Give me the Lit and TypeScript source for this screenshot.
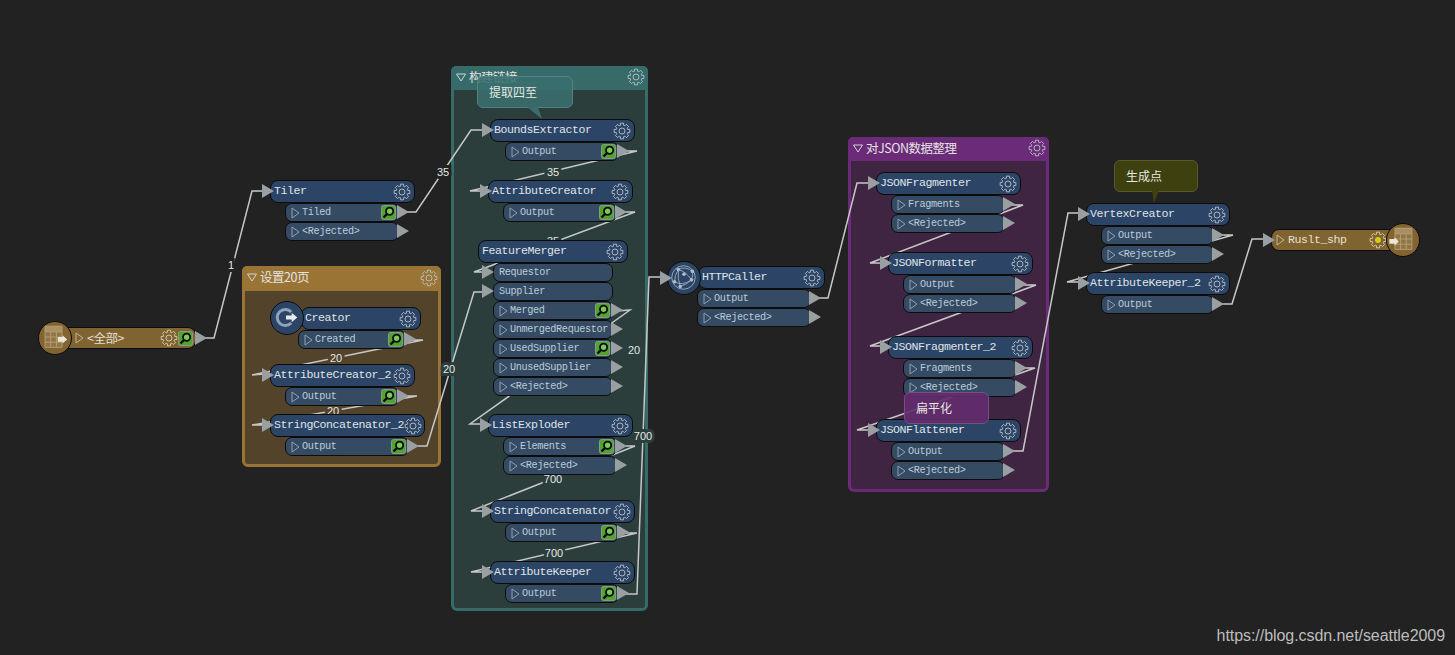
import { LitElement, html, css, svg } from "lit";
import { customElement } from "lit/decorators.js";

type Port = { n: string; mag?: boolean; input?: boolean };
type Node = { name: string; x: number; y: number; w: number; px?: number; pw?: number; ports: Port[]; noInput?: boolean };

const out = (...names: string[]): Port[] =>
  names.map((s) => (s.endsWith("*") ? { n: s.slice(0, -1), mag: true } : { n: s }));

const NODES: Node[] = [
  { name: "Tiler", x: 270, y: 180, w: 145, ports: out("Tiled*", "<Rejected>") },
  { name: "Creator", x: 301, y: 307, w: 120, px: -3, pw: 108, noInput: true, ports: out("Created*") },
  { name: "AttributeCreator_2", x: 270, y: 364, w: 145, ports: out("Output*") },
  { name: "StringConcatenator_2", x: 270, y: 414, w: 155, ports: out("Output*") },
  { name: "BoundsExtractor", x: 490, y: 119, w: 145, ports: out("Output*") },
  { name: "AttributeCreator", x: 488, y: 180, w: 145, ports: out("Output*") },
  {
    name: "FeatureMerger", x: 478, y: 240, w: 150, pw: 120, noInput: true,
    ports: [
      { n: "Requestor", input: true }, { n: "Supplier", input: true },
      ...out("Merged*", "UnmergedRequestor", "UsedSupplier*", "UnusedSupplier", "<Rejected>"),
    ],
  },
  { name: "ListExploder", x: 488, y: 414, w: 145, ports: out("Elements*", "<Rejected>") },
  { name: "StringConcatenator", x: 490, y: 500, w: 145, ports: out("Output*") },
  { name: "AttributeKeeper", x: 490, y: 561, w: 145, ports: out("Output*") },
  { name: "HTTPCaller", x: 698, y: 266, w: 127, px: -1, pw: 114, noInput: true, ports: out("Output", "<Rejected>") },
  { name: "JSONFragmenter", x: 876, y: 172, w: 145, ports: out("Fragments", "<Rejected>") },
  { name: "JSONFormatter", x: 888, y: 252, w: 145, ports: out("Output", "<Rejected>") },
  { name: "JSONFragmenter_2", x: 888, y: 336, w: 145, ports: out("Fragments", "<Rejected>") },
  { name: "JSONFlattener", x: 876, y: 419, w: 145, ports: out("Output", "<Rejected>") },
  { name: "VertexCreator", x: 1086, y: 203, w: 144, ports: out("Output", "<Rejected>") },
  { name: "AttributeKeeper_2", x: 1086, y: 272, w: 144, ports: out("Output") },
];

const GROUPS = [
  { name: "设置20页", x: 242, y: 266, w: 199, h: 201, bar: 25, tone: "brown" },
  { name: "构建链接", x: 451, y: 66, w: 197, h: 545, bar: 24, tone: "teal" },
  { name: "对JSON数据整理", x: 848, y: 137, w: 201, h: 355, bar: 24, tone: "purple" },
];

const LINES: [number, number][][] = [
  [[200, 338], [214, 338], [252, 191], [266, 191]],
  [[402, 212], [416, 212], [471, 130], [484, 130]],
  [[622, 151], [637, 151], [470, 191], [482, 191]],
  [[622, 212], [635, 212], [474, 272], [486, 272]],
  [[410, 340], [423, 340], [252, 375], [265, 374]],
  [[404, 396], [417, 396], [252, 425], [265, 425]],
  [[412, 446], [427, 446], [474, 292], [486, 292]],
  [[617, 311], [630, 310], [470, 424], [482, 424]],
  [[622, 446], [635, 446], [471, 511], [484, 511]],
  [[622, 533], [637, 533], [471, 572], [484, 572]],
  [[622, 594], [637, 594], [649, 277], [664, 277]],
  [[814, 298], [828, 298], [857, 183], [870, 183]],
  [[1009, 205], [1023, 205], [870, 263], [882, 263]],
  [[1021, 285], [1036, 285], [870, 346], [882, 346]],
  [[1021, 368], [1035, 368], [857, 430], [870, 430]],
  [[1008, 451], [1023, 451], [1068, 213], [1080, 213]],
  [[1218, 235], [1233, 235], [1067, 282], [1080, 282]],
  [[1218, 304], [1232, 304], [1252, 239], [1264, 239]],
];

const BG = "#222222";
const TEAL = "#2b3e3b";
const BROWN = "#54432b";
const LABELS: [string, number, number, string][] = [
  ["1", 231, 265, BG],
  ["35", 443, 172, BG],
  ["35", 553, 172, TEAL],
  ["35", 553, 241, TEAL],
  ["20", 336, 358, BROWN],
  ["20", 333, 411, BROWN],
  ["20", 449, 369, TEAL],
  ["20", 634, 350, TEAL],
  ["700", 553, 479, TEAL],
  ["700", 554, 553, TEAL],
  ["700", 643, 436, TEAL],
];

const ANNOTATIONS = [
  { text: "提取四至", x: 477, y: 76, w: 96, h: 32, tone: "a-teal", tail: "50,31 61,31 65,43" },
  { text: "生成点", x: 1114, y: 160, w: 84, h: 32, tone: "a-olive", tail: "38,31 45,31 40,43" },
  { text: "扁平化", x: 904, y: 392, w: 85, h: 32, tone: "a-purple", tail: "" },
];

function gearPath(): string {
  const n = 8, ro = 8, ri = 5.9;
  const pts: string[] = [];
  for (let i = 0; i < n; i++) {
    const a = (i * 2 * Math.PI) / n;
    const d = 0.2, e = 0.27;
    const add = (r: number, t: number) => pts.push(`${(r * Math.cos(t)).toFixed(2)} ${(r * Math.sin(t)).toFixed(2)}`);
    add(ri, a - e);
    add(ro, a - d);
    add(ro, a + d);
    add(ri, a + e);
  }
  return "M" + pts.join("L") + "Z";
}
const GEAR = gearPath();

const gear = (dot = false) => html`<svg class="gear" viewBox="-9 -9 18 18">
  <path d=${GEAR}></path>
  ${dot ? svg`<circle class="gear-dot" r="3"></circle>` : svg`<circle r="3"></circle>`}
</svg>`;

const expander = () => html`<svg class="exp" viewBox="0 0 9 12"><path d="M1 1 L8 6 L1 11 Z"></path></svg>`;

const mag = () => html`<svg class="mag" viewBox="0 0 15 15">
  <rect class="mag-bg" x="0.5" y="0.5" width="14" height="14" rx="2"></rect>
  <line class="mag-h" x1="6" y1="9" x2="2.5" y2="12.5"></line>
  <circle class="mag-l" cx="8.6" cy="6.2" r="3.6"></circle>
</svg>`;

const tableIcon = (left: boolean) => html`<svg class="disc-ic" viewBox="0 0 33 33">
  <g transform=${left ? "translate(2 0)" : "translate(0 0)"}>
    <rect class="t-head" x="6.5" y="4.5" width="18" height="6"></rect>
    <path class="t-grid" d="M6.5 4.5H24.5V27H6.5ZM6.5 10.5H24.5M6.5 16H24.5M6.5 21.5H24.5M12.5 10.5V27M18.5 10.5V27"></path>
  </g>
  <path class="t-arrow" d=${left ? "M2.5 16H8V14L12.5 18.5L8 23V21H2.5Z" : "M20 16H25V14L30 18.5L25 23V21H20Z"}></path>
</svg>`;

const creatorIcon = () => html`<svg class="disc-ic" viewBox="0 0 33 33">
  <path class="c-ring" d="M21.5 10.6 A8.6 8.6 0 1 0 21.5 22.4"></path>
  <path class="c-arrow" d="M16 14.3H22V11.5L28 16.5L22 21.5V18.7H16Z"></path>
</svg>`;

const globeIcon = () => html`<svg class="disc-ic" viewBox="0 0 33 33">
  <circle class="g-line" cx="16.5" cy="16.5" r="12.5"></circle>
  <path class="g-line" d="M11 8Q18 4 26 10M11 8Q7 14 7 21M11 8Q19 10 25 19M11 8Q10 18 13 26M25 19Q27 14 26 10M7 21Q15 26 25 19M13 26Q20 24 25 19"></path>
  ${[[11, 8], [26, 10], [25, 19], [13, 26], [7, 21], [17, 13]].map(
    ([x, y]) => svg`<circle class="g-dot" cx=${x} cy=${y} r="1.9"></circle>`
  )}
</svg>`;

@customElement("app-root")
export class AppRoot extends LitElement {
  static styles = css`
    :host {
      display: block;
      position: relative;
      width: 1455px;
      height: 655px;
      overflow: hidden;
      background: #222222;
      font-family: "Liberation Mono", "Noto Sans CJK SC", monospace;
    }
    .wires {
      position: absolute;
      left: 0;
      top: 0;
      width: 1455px;
      height: 655px;
    }
    .wires polyline { fill: none; stroke: #c6c8c8; stroke-width: 1.5; }
    .wires text {
      fill: #e6e6e6;
      font: 11px "Liberation Sans", sans-serif;
      text-anchor: middle;
      dominant-baseline: central;
      paint-order: stroke;
      stroke-width: 6px;
    }

    .group {
      position: absolute;
      box-sizing: border-box;
      border-radius: 6px;
      border: 3px solid;
      display: flex;
      flex-direction: column;
    }
    .group.brown { border-color: #9a7434; background: #54432b; }
    .group.teal { border-color: #376b69; background: #2b3e3b; }
    .group.purple { border-color: #6b2b78; background: #402543; }
    .brown .bar { background: #9a7434; }
    .teal .bar { background: #376b69; }
    .purple .bar { background: #6b2b78; }
    .bar {
      display: flex;
      align-items: center;
      gap: 3px;
      box-sizing: border-box;
      color: #e4e4e4;
      font-size: 12.5px;
      letter-spacing: -0.5px;
      font-family: "Noto Sans CJK SC", sans-serif;
      margin: -3px -3px 0 -3px;
      padding: 0 3px 4px 5px;
      border-radius: 5px 5px 0 0;
    }
    .bar .gear { margin-left: auto; margin-top: 2px; }
    .tri-down { width: 10px; height: 9px; flex: none; fill: none; stroke: #d0d4d4; stroke-width: 1; margin-top: 2px; }

    .node {
      position: absolute;
      display: flex;
      flex-direction: column;
    }
    .head {
      position: relative;
      box-sizing: border-box;
      height: 23px;
      display: flex;
      align-items: center;
      justify-content: space-between;
      padding: 0 3px 3px 3px;
      background: #2c4566;
      border: 1px solid #0c0c0c;
      border-radius: 8px;
      color: #dfe4e8;
      font-size: 11.6px;
      letter-spacing: -0.46px;
      white-space: nowrap;
    }
    .head .gear { margin-top: 3px; }
    .ports { display: flex; flex-direction: column; position: relative; }
    .port {
      position: relative;
      box-sizing: border-box;
      height: 19px;
      display: flex;
      align-items: center;
      padding: 0 2px 1px 5px;
      gap: 2px;
      background: #354b64;
      border: 1px solid #0c0c0c;
      border-radius: 7px;
      color: #bccbd9;
      font-size: 10.2px;
      letter-spacing: -0.35px;
      white-space: nowrap;
    }
    .port .mag { margin-left: auto; margin-top: 1px; }
    .exp { width: 9px; height: 12px; flex: none; margin-top: 1px; }
    .exp path { fill: none; stroke: #8fa0b0; stroke-width: 1; }
    .gear { width: 18px; height: 18px; flex: none; }
    .gear path, .gear circle { fill: none; stroke: #b9c2ca; stroke-width: 0.9; }
    .gear .gear-dot { fill: #cfc414; stroke: none; }
    .mag { width: 15px; height: 15px; flex: none; }
    .mag-bg { fill: #4fa52f; stroke: #8a9a80; stroke-width: 1; }
    .mag-l { fill: #7cc85a; stroke: #0a0a0a; stroke-width: 1.8; }
    .mag-h { stroke: #0a0a0a; stroke-width: 2.4; }
    .tri-out, .tri-in {
      position: absolute;
      width: 12px;
      height: 14px;
      background: #9a9fa2;
      clip-path: polygon(0 0, 100% 50%, 0 100%);
    }
    .tri-out { right: -11px; top: 1px; }
    .tri-in { left: -9px; top: 3px; }
    .port .tri-in { left: -12px; top: 1px; }

    .disc {
      position: absolute;
      box-sizing: border-box;
      width: 34px;
      height: 34px;
      border-radius: 50%;
      border: 1.5px solid #0c0c0c;
    }
    .disc.blue { background: #2c4566; }
    .disc.tan { background: #836431; }
    .disc-ic { display: block; width: 31px; height: 31px; }
    .disc .tri-in { left: -8px; top: 9px; }
    .t-head { fill: #a28a5e; }
    .t-grid { fill: rgba(185, 160, 115, 0.3); stroke: #b39f78; stroke-width: 1; }
    .t-arrow { fill: #ece6d6; }
    .c-ring { fill: none; stroke: #8ea4be; stroke-width: 3.2; }
    .c-arrow { fill: #e6ebf0; }
    .g-line { fill: none; stroke: #a4b2c4; stroke-width: 0.9; }
    .g-dot { fill: #aebbcc; }

    .pill {
      position: absolute;
      box-sizing: border-box;
      height: 22px;
      display: flex;
      align-items: center;
      gap: 3px;
      padding: 0 3px 2px 4px;
      background: #7f6330;
      border: 1px solid #0c0c0c;
      border-radius: 8px;
      color: #e6e0d2;
      font-size: 11.6px;
      letter-spacing: -0.46px;
      white-space: nowrap;
    }
    .pill .exp path { stroke: #c3b594; }
    .pill .gear { margin-top: 2px; }
    .pill .gear path, .pill .gear circle { stroke: #d9cfb6; }
    .pill .gear .gear-dot { fill: #d8cb14; stroke: none; }
    .pill .spacer { flex: 1; }
    .pill .zh { font-family: "Noto Sans CJK SC", sans-serif; font-size: 12.5px; }
    .pill .mag { margin-left: -3px; margin-top: 2px; }
    .pill .tail { width: 5px; }
    .pill.src { padding-left: 14px; padding-right: 2px; }
    .pill.src .tri-out { top: 3px; right: -12px; }

    .note {
      position: absolute;
      box-sizing: border-box;
      height: 32px;
      display: flex;
      align-items: center;
      padding: 0 0 2px 11px;
      border: 1px solid;
      border-radius: 6px;
      color: #e4e8e0;
      font: 12px "Noto Sans CJK SC", sans-serif;
    }
    .note svg { position: absolute; left: -1px; top: -1px; width: 100px; height: 46px; overflow: visible; }
    .a-teal { background: rgba(58, 110, 110, 0.88); border-color: #4f8280; }
    .a-teal polygon { fill: #3a6e6e; }
    .a-olive { background: #3f400f; border-color: #5a5b2b; }
    .a-olive polygon { fill: #3f400f; }
    .a-purple { background: rgba(100, 44, 110, 0.9); border-color: #7b4c88; }

    .mark {
      position: absolute;
      right: 10px;
      bottom: 10px;
      color: #bdbdbd;
      font: 16px/19px "Liberation Sans", sans-serif;
      letter-spacing: -0.06px;
    }
  `;

  private renderNode(n: Node) {
    const px = n.px ?? 15;
    const pw = n.pw ?? n.w - 31;
    return html`<div class="node" style="left:${n.x}px;top:${n.y}px;width:${n.w}px">
      <div class="head">
        ${n.noInput ? "" : html`<span class="tri-in"></span>`}
        <span>${n.name}</span>${gear()}
      </div>
      <div class="ports" style="margin-left:${px}px;width:${pw}px">
        ${n.ports.map((p) =>
          p.input
            ? html`<div class="port"><span class="tri-in"></span><span>${p.n}</span></div>`
            : html`<div class="port">
                ${expander()}<span>${p.n}</span>${p.mag ? mag() : ""}
                <span class="tri-out"></span>
              </div>`
        )}
      </div>
    </div>`;
  }

  render() {
    return html`
      ${GROUPS.map(
        (g) => html`<div class="group ${g.tone}" style="left:${g.x}px;top:${g.y}px;width:${g.w}px;height:${g.h}px">
          <div class="bar" style="height:${g.bar}px">
            <svg class="tri-down" viewBox="0 0 10 9"><path d="M0.5 1H9.5L5 8Z"></path></svg>
            <span>${g.name}</span>${gear()}
          </div>
        </div>`
      )}

      <svg class="wires" viewBox="0 0 1455 655">
        ${LINES.map((l) => svg`<polyline points=${l.map((p) => p.join(",")).join(" ")}></polyline>`)}
        ${LABELS.map(([t, x, y, c]) => svg`<text x=${x} y=${y} stroke=${c}>${t}</text>`)}
      </svg>

      ${NODES.map((n) => this.renderNode(n))}

      <div class="pill src" style="left:60px;top:327px;width:136px">
        ${expander()}<span class="zh">&lt;全部&gt;</span><span class="spacer"></span>${gear()}${mag()}
        <span class="tri-out"></span>
      </div>
      <div class="disc tan" style="left:38px;top:321px">${tableIcon(false)}</div>

      <div class="pill" style="left:1271px;top:229px;width:128px">
        <span class="tri-in"></span>
        ${expander()}<span>Ruslt_shp</span><span class="spacer"></span>${gear(true)}
        <span class="tail"></span>
      </div>
      <div class="disc tan" style="left:1386px;top:223px">${tableIcon(true)}</div>

      <div class="disc blue" style="left:270px;top:301px">${creatorIcon()}</div>
      <div class="disc blue" style="left:667px;top:261px"><span class="tri-in"></span>${globeIcon()}</div>

      ${ANNOTATIONS.map(
        (a) => html`<div class="note ${a.tone}" style="left:${a.x}px;top:${a.y}px;width:${a.w}px">
          ${a.tail ? svg`<svg viewBox="0 0 100 46"><polygon points=${a.tail}></polygon></svg>` : ""}
          <span>${a.text}</span>
        </div>`
      )}

      <div class="mark">https://blog.csdn.net/seattle2009</div>
    `;
  }
}
